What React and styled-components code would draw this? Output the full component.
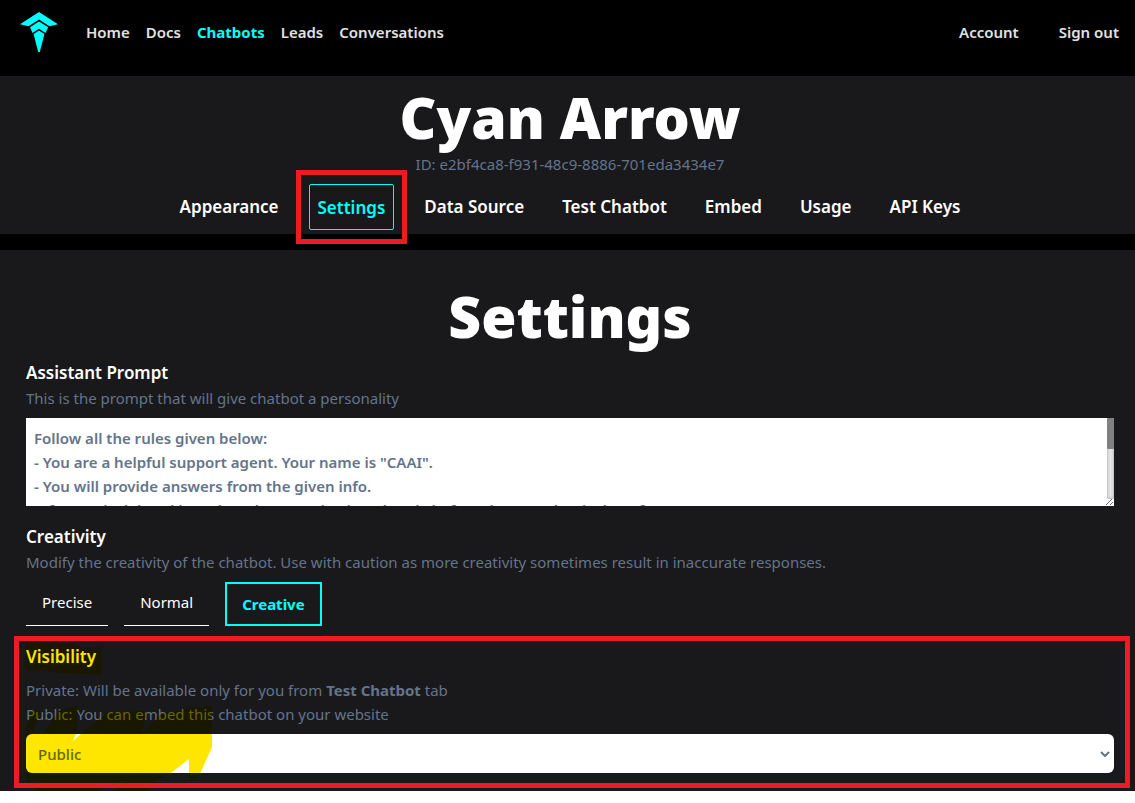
import React from 'react';
import styled, { createGlobalStyle, css } from 'styled-components';

const cyan = '#00ffff';
const muted = '#64748b';
const panel = '#19191b';

const GlobalStyle = createGlobalStyle`
  *, *::before, *::after { box-sizing: border-box; }
  body {
    margin: 0;
    background: #fff;
    font-family: 'Noto Sans', 'Open Sans', sans-serif;
    font-size: 15px;
    line-height: 24px;
    color: #fff;
  }
  button, select, textarea { font: inherit; }
  h1, h2, h3, p { margin: 0; }
`;

const Page = styled.div`
  background: #000;
`;

const Header = styled.header`
  display: flex;
  align-items: center;
  padding: 12px 16px 24px 20px;
`;

const HomeLink = styled.a`
  display: block;
  height: 40px;
  margin-right: 28px;
`;

const NavLinks = styled.nav`
  display: flex;
  flex: 1;
  gap: 16px;
`;

const AccountLinks = styled.nav`
  display: flex;
  gap: 40px;
`;

const NavLink = styled.a`
  color: ${({ $active }) => ($active ? cyan : '#e2e2e2')};
  font-weight: ${({ $active }) => ($active ? 700 : 600)};
  text-decoration: none;
`;

const Panel = styled.section`
  background: ${panel};
  padding: ${({ $hero }) => ($hero ? '13px 21px 4px 26px' : '38px 21px 18px 26px')};
  margin-bottom: ${({ $hero }) => ($hero ? '16px' : '0')};
`;

const Title = styled.h1`
  font-size: 57px;
  line-height: 56px;
  font-weight: 900;
  text-align: center;
`;

const BotId = styled.p`
  margin: 7px 0 8px;
  color: ${muted};
  text-align: center;
`;

const Tabs = styled.nav`
  display: flex;
  justify-content: center;
  align-items: flex-start;
  gap: 22px;
`;

const Tab = styled.a`
  position: relative;
  padding: 11px 8px 9px;
  font-size: 17px;
  font-weight: 600;
  color: #fff;
  text-decoration: none;
  ${({ $active }) =>
    $active &&
    css`
      color: ${cyan};
      border: 1px solid ${cyan};
      border-radius: 2px;
    `}
`;

const Callout = styled.span`
  position: absolute;
  inset: ${({ $inset }) => $inset};
  border: 5px solid #ed1c24;
  pointer-events: none;
`;

const Form = styled.form`
  display: flex;
  flex-direction: column;
  gap: 18px;
  margin-top: 16px;
`;

const Field = styled.div`
  position: relative;
  display: flex;
  flex-direction: column;
`;

const Label = styled.label`
  align-self: flex-start;
  font-size: 17px;
  line-height: 26px;
  font-weight: 600;
`;

const Help = styled.p`
  color: ${muted};
  margin-bottom: 8px;
  margin-top: ${({ $spaced }) => ($spaced ? '8px' : '0')};
`;

const PromptBox = styled.div`
  position: relative;
`;

const Prompt = styled.textarea`
  display: block;
  width: 100%;
  height: 88px;
  padding: 8px 16px 8px 8px;
  border: 0;
  outline: 0;
  resize: vertical;
  overflow-y: scroll;
  scrollbar-width: none;
  background: #fff;
  color: ${muted};
  font-weight: 600;
`;

const ScrollTrack = styled.span`
  position: absolute;
  top: 0;
  right: 0;
  bottom: 7px;
  width: 7px;
  border-radius: 2px;
  background: #e4e4e4;
  box-shadow: inset 0 0 3px #999;
  pointer-events: none;
`;

const ScrollThumb = styled.span`
  display: block;
  height: 31px;
  border-radius: 1px;
  background: #808080;
`;

const Options = styled.div`
  display: flex;
  gap: 16px;
`;

const Option = styled.button`
  height: 44px;
  padding: 0 16px 3px;
  background: none;
  border: 0 solid #fff;
  border-bottom-width: 1px;
  color: #fff;
  cursor: pointer;
  ${({ $active }) =>
    $active &&
    css`
      padding: 0 15px;
      border: 2px solid ${cyan};
      color: ${cyan};
      font-weight: 700;
    `}
`;

const SelectBox = styled.div`
  display: grid;
  align-items: center;
  & > * { grid-area: 1 / 1; }
  & > svg { justify-self: end; margin-right: 4px; pointer-events: none; }
`;

const Select = styled.select`
  appearance: none;
  width: 100%;
  height: 39px;
  padding: 0 12px;
  border: 0;
  border-radius: 6px;
  background: #fff;
  color: ${muted};
  font-weight: 500;
`;

const Marker = styled.svg`
  position: absolute;
  top: -4px;
  left: -2px;
  mix-blend-mode: multiply;
  pointer-events: none;
`;

const prompt = `Follow all the rules given below:
- You are a helpful support agent. Your name is "CAAI".
- You will provide answers from the given info.
- If a URL is deleted based on the user check and reply before the new chat is done for.
- Keep every answer short and polite.
- Ask for an email address when a lead is found.
- Do not answer questions on other topics.
- Say so when you do not know the answer.`;

function Logo() {
  return (
    <svg width="38" height="40" viewBox="0 0 38 40" fill={cyan} aria-hidden="true">
      <path d="M19 0 38 12.2 29.5 14.2 19 7.6 8.5 14.2 0 12.2Z" />
      <path d="M19 9.4 28.2 15.2 25.5 21 19 16.8 12.5 21 10 15.2Z" />
      <path d="M19 18.6 24.4 22 19.8 40H18.2L13.6 22Z" />
    </svg>
  );
}

const tabs = ['Appearance', 'Settings', 'Data Source', 'Test Chatbot', 'Embed', 'Usage', 'API Keys'];
const pages = ['Home', 'Docs', 'Chatbots', 'Leads', 'Conversations'];

export default function App() {
  const [creativity, setCreativity] = React.useState('Creative');
  return (
    <Page>
      <GlobalStyle />
      <Header>
        <HomeLink href="#" aria-label="Home page"><Logo /></HomeLink>
        <NavLinks>
          {pages.map((p) => (
            <NavLink key={p} href="#" $active={p === 'Chatbots'}>{p}</NavLink>
          ))}
        </NavLinks>
        <AccountLinks>
          <NavLink href="#">Account</NavLink>
          <NavLink href="#">Sign out</NavLink>
        </AccountLinks>
      </Header>

      <Panel $hero>
        <Title>Cyan Arrow</Title>
        <BotId>ID: e2bf4ca8-f931-48c9-8886-701eda3434e7</BotId>
        <Tabs>
          {tabs.map((t) => (
            <Tab key={t} href="#" $active={t === 'Settings'}>
              {t}
              {t === 'Settings' && <Callout $inset="-15px -14px -15px -14px" />}
            </Tab>
          ))}
        </Tabs>
      </Panel>

      <Panel>
        <Title as="h2">Settings</Title>
        <Form>
          <Field>
            <Label htmlFor="prompt">Assistant Prompt</Label>
            <Help>This is the prompt that will give chatbot a personality</Help>
            <PromptBox>
              <Prompt id="prompt" defaultValue={prompt} spellCheck={false} />
              <ScrollTrack aria-hidden="true"><ScrollThumb /></ScrollTrack>
            </PromptBox>
          </Field>

          <Field role="group" aria-labelledby="creativity">
            <Label as="h3" id="creativity">Creativity</Label>
            <Help>
              Modify the creativity of the chatbot. Use with caution as more creativity sometimes
              result in inaccurate responses.
            </Help>
            <Options>
              {['Precise', 'Normal', 'Creative'].map((o) => (
                <Option key={o} type="button" $active={o === creativity} onClick={() => setCreativity(o)}>
                  {o}
                </Option>
              ))}
            </Options>
          </Field>

          <Field>
            <Label htmlFor="visibility">Visibility</Label>
            <Help $spaced>
              Private: Will be available only for you from <strong>Test Chatbot</strong> tab
              <br />
              Public: You can embed this chatbot on your website
            </Help>
            <SelectBox>
              <Select id="visibility" defaultValue="Public">
                <option>Private</option>
                <option>Public</option>
              </Select>
              <svg width="10" height="6" viewBox="0 0 10 6" fill="none" stroke={muted} strokeWidth="2" aria-hidden="true">
                <path d="M1 1 5 5 9 1" />
              </svg>
            </SelectBox>
            <Marker width="190" height="151" viewBox="24 640 190 151" fill="#ffe600" aria-hidden="true">
              <path d="M25 642 76 644 80 647H101V675L80 674 50 672 48 670 25 669Z" />
              <path d="M26 728 32 711 40 710 33 733 42 734 60 710 78 706 76 734 73 741 81 734 108 712 147 711 142 732 162 714 190 708 212 706V747L200 774 196 779H189V759L171 773 158 780 145 791H116L126 780 96 791H34L42 781 26 784Z" />
            </Marker>
            <Callout $inset="-8px -16px -15px -12px" />
          </Field>
        </Form>
      </Panel>
    </Page>
  );
}
